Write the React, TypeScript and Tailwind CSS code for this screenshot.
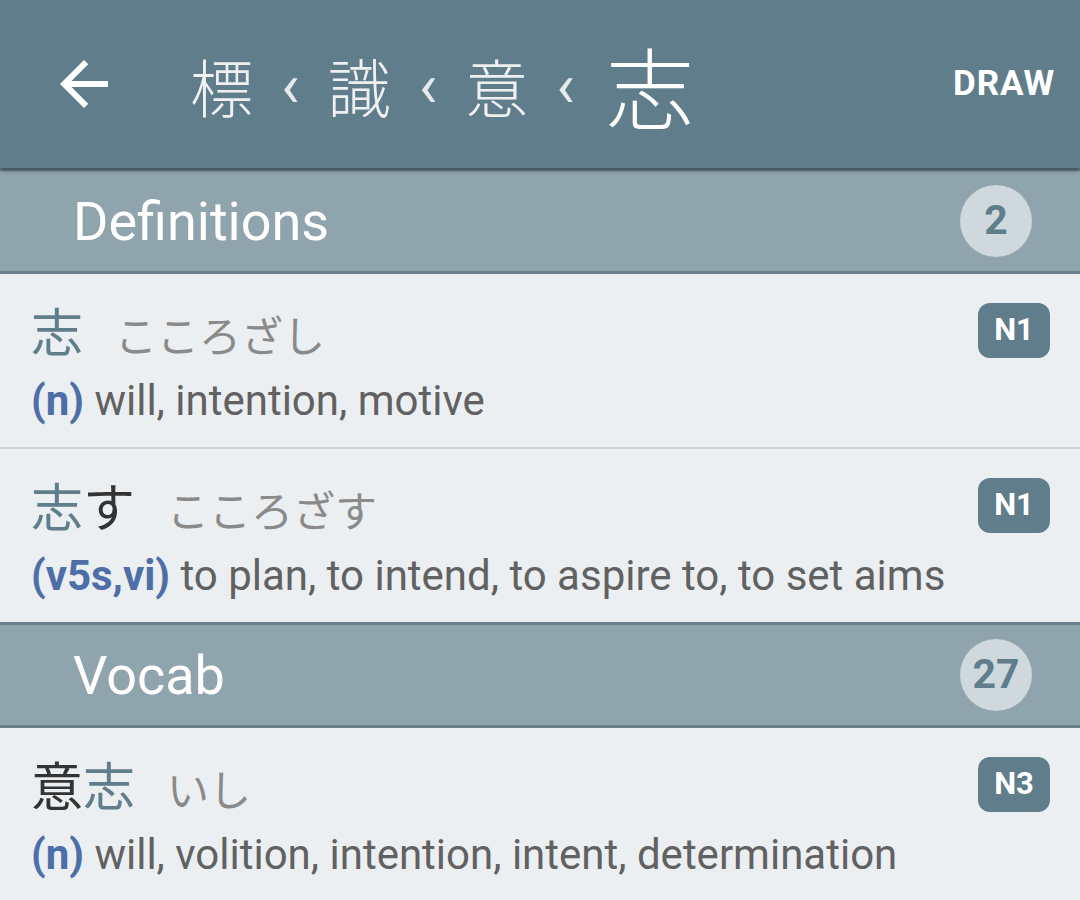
const jp = { fontFamily: '"Noto Sans CJK JP", "Noto Sans", sans-serif' };
const roboto = { fontFamily: 'Roboto, "Noto Sans CJK JP", sans-serif' };

type Part = { text: string; kanji?: boolean };

interface Entry {
  word: Part[];
  reading: string;
  tag: string;
  gloss: string;
  level: string;
}

const definitions: Entry[] = [
  {
    word: [{ text: '志', kanji: true }],
    reading: 'こころざし',
    tag: '(n)',
    gloss: 'will, intention, motive',
    level: 'N1',
  },
  {
    word: [{ text: '志', kanji: true }, { text: 'す' }],
    reading: 'こころざす',
    tag: '(v5s,vi)',
    gloss: 'to plan, to intend, to aspire to, to set aims',
    level: 'N1',
  },
];

const vocab: Entry[] = [
  {
    word: [{ text: '意' }, { text: '志', kanji: true }],
    reading: 'いし',
    tag: '(n)',
    gloss: 'will, volition, intention, intent, determination',
    level: 'N3',
  },
];

const Chevron = () => (
  <span className="text-[62px] text-[#e6eaec] leading-none pt-[4px]" style={roboto}>
    ‹
  </span>
);

const Header = () => (
  <div className="relative z-10 h-[168px] bg-[#607d8b] flex items-center shadow-[0_3px_4px_rgba(0,0,0,0.35)]">
    <svg viewBox="0 0 24 24" className="ml-[48px] w-[72px] h-[72px] fill-white">
      <path d="M20 11H7.83l5.59-5.59L12 4l-8 8 8 8 1.41-1.41L7.83 13H20v-2z" />
    </svg>
    <div className="ml-[70px] flex items-center gap-[28px] text-[#eef0f1]" style={jp}>
      <span className="text-[63px] font-light leading-none">標</span>
      <Chevron />
      <span className="text-[63px] font-light leading-none">識</span>
      <Chevron />
      <span className="text-[63px] font-light leading-none">意</span>
      <Chevron />
      <span className="ml-[3px] text-[88px] font-light leading-none text-white">志</span>
    </div>
    <div className="ml-auto mr-[25px] text-[35px] font-bold text-white tracking-wide" style={roboto}>
      DRAW
    </div>
  </div>
);

const SectionHeader = ({ title, count }: { title: string; count: number }) => (
  <div className="h-[106px] bg-[#90a4ae] border-y-[3px] border-[#6a7f89] flex items-center justify-between">
    <span className="pl-[73px] text-[54px] text-white" style={roboto}>
      {title}
    </span>
    <span
      className="mr-[48px] w-[72px] h-[72px] rounded-full bg-[#cfd8dc] text-[#607d8b] text-[41px] font-bold flex items-center justify-center"
      style={roboto}
    >
      {count}
    </span>
  </div>
);

const Row = ({ entry, last }: { entry: Entry; last?: boolean }) => (
  <div
    className={`bg-[#eceff1] pl-[31px] pr-[30px] pt-[24px] pb-[20px] flex justify-between items-start ${
      last ? '' : 'border-b-2 border-[#d0d3d5]'
    }`}
  >
    <div>
      <div className="flex items-baseline h-[64px] leading-[64px]" style={jp}>
        <span className="text-[52px]">
          {entry.word.map((p, i) => (
            <span key={i} className={p.kanji ? 'text-[#607d8b]' : 'text-[#333333]'}>
              {p.text}
            </span>
          ))}
        </span>
        <span className="ml-[32px] text-[42px] leading-[42px] text-[#8a8a8a]">{entry.reading}</span>
      </div>
      <div className="mt-[13px] text-[42px] leading-[52px] text-[#616161]" style={roboto}>
        <span className="font-bold text-[#4d6ea6]">{entry.tag}</span> {entry.gloss}
      </div>
    </div>
    <span
      className="mt-[5px] w-[72px] h-[55px] rounded-[12px] bg-[#607d8b] text-white text-[31px] font-bold flex items-center justify-center"
      style={roboto}
    >
      {entry.level}
    </span>
  </div>
);

export default function App() {
  return (
    <div className="w-[1080px] h-[900px] overflow-hidden bg-[#eceff1]">
      <Header />
      <SectionHeader title="Definitions" count={2} />
      {definitions.map((e, i) => (
        <Row key={e.reading} entry={e} last={i === definitions.length - 1} />
      ))}
      <SectionHeader title="Vocab" count={27} />
      {vocab.map((e) => (
        <Row key={e.reading} entry={e} />
      ))}
    </div>
  );
}
